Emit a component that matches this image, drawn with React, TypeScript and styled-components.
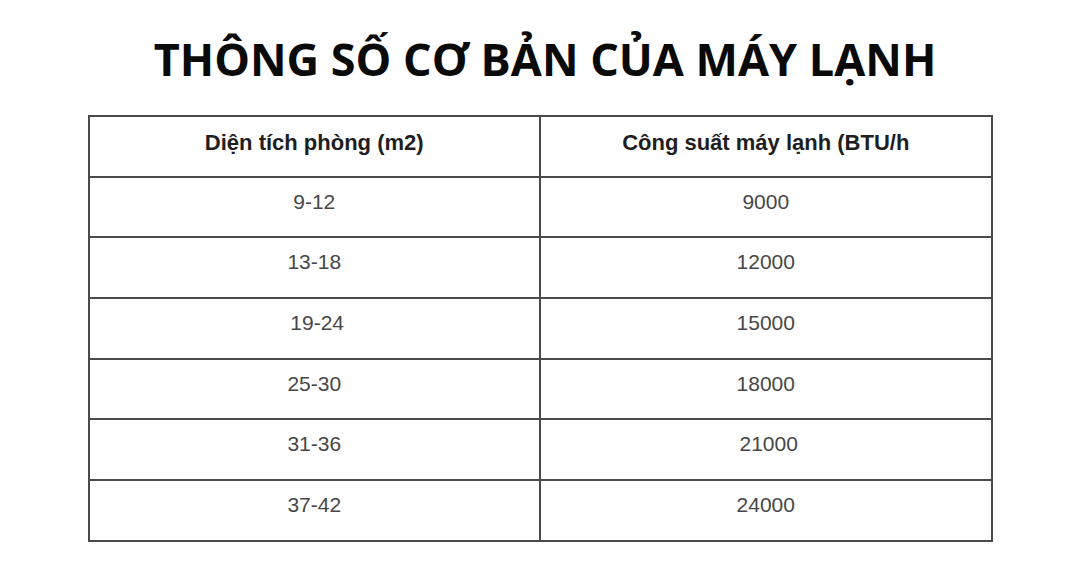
import React from "react";
import styled, { createGlobalStyle } from "styled-components";

const Global = createGlobalStyle`
  html, body { margin: 0; padding: 0; background: #ffffff; }
  * { box-sizing: border-box; }
`;

const Page = styled.div`
  width: 1080px;
  height: 562px;
  display: flex;
  flex-direction: column;
  align-items: center;
  background: #ffffff;
`;

const Title = styled.h1`
  margin: 32px 0 0 10px;
  font-family: "Open Sans", "Noto Sans", sans-serif;
  font-weight: 700;
  font-size: 45px;
  line-height: 54px;
  color: #0a0a0a;
  letter-spacing: 0;
`;

const Table = styled.div`
  margin-top: 29px;
  width: 905px;
  display: grid;
  grid-template-columns: 1fr 1fr;
  grid-auto-rows: 60.7px;
  border-top: 2px solid #4a4a4a;
  border-left: 2px solid #4a4a4a;
`;

const Cell = styled.div<{ $head?: boolean }>`
  border-right: 2px solid #4a4a4a;
  border-bottom: 2px solid #4a4a4a;
  padding-top: ${(p) => (p.$head ? "14px" : "12px")};
  text-align: center;
  white-space: pre;
  font-family: "Liberation Sans", Arial, sans-serif;
  font-size: ${(p) => (p.$head ? "22px" : "21px")};
  line-height: 24px;
  font-weight: ${(p) => (p.$head ? 700 : 400)};
  color: ${(p) => (p.$head ? "#1e1e1e" : "#474747")};
`;

const rows: [string, string][] = [
  ["9-12", "9000"],
  ["13-18", "12000"],
  [" 19-24", "15000"],
  ["25-30", "18000"],
  ["31-36", " 21000"],
  ["37-42", "24000"],
];

export default function App() {
  return (
    <Page>
      <Global />
      <Title>THÔNG SỐ CƠ BẢN CỦA MÁY LẠNH</Title>
      <Table>
        <Cell $head>Diện tích phòng (m2)</Cell>
        <Cell $head>Công suất máy lạnh (BTU/h</Cell>
        {rows.map(([a, b], i) => (
          <React.Fragment key={i}>
            <Cell>{a}</Cell>
            <Cell>{b}</Cell>
          </React.Fragment>
        ))}
      </Table>
    </Page>
  );
}
